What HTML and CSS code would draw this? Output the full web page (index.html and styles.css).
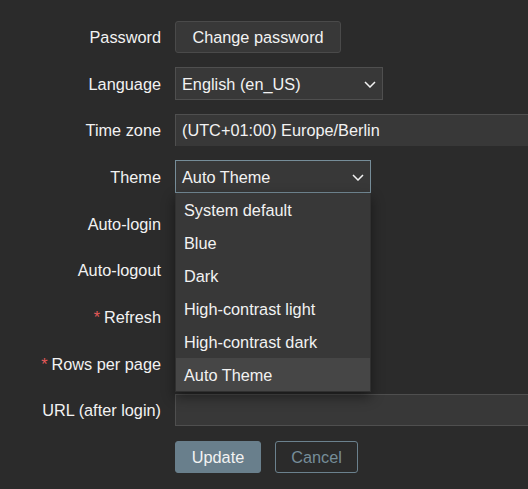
FILE: index.html
```html
<!DOCTYPE html>
<html>
<head>
<meta charset="utf-8">
<link rel="stylesheet" href="styles.css">
</head>
<body>
<form class="form">
  <div class="label">Password</div>
  <div class="field"><button type="button" class="btn btn-grey">Change password</button></div>

  <div class="label">Language</div>
  <div class="field"><div class="select sel-lang"><span>English (en_US)</span><svg class="chev" width="12" height="7" viewBox="0 0 12 7"><path d="M1 1 L6 6 L11 1" fill="none" stroke="#f2f2f2" stroke-width="1.5"/></svg></div></div>

  <div class="label">Time zone</div>
  <div class="field clip"><div class="select sel-tz"><span>(UTC+01:00) Europe/Berlin</span></div></div>

  <div class="label">Theme</div>
  <div class="field">
    <div class="theme-wrap">
      <div class="select sel-theme focused"><span>Auto Theme</span><svg class="chev" width="12" height="7" viewBox="0 0 12 7"><path d="M1 1 L6 6 L11 1" fill="none" stroke="#f2f2f2" stroke-width="1.5"/></svg></div>
      <ul class="dropdown">
        <li>System default</li>
        <li>Blue</li>
        <li>Dark</li>
        <li>High-contrast light</li>
        <li>High-contrast dark</li>
        <li class="hover">Auto Theme</li>
      </ul>
    </div>
  </div>

  <div class="label">Auto-login</div>
  <div class="field"><span class="checkbox"></span></div>

  <div class="label">Auto-logout</div>
  <div class="field"><span class="checkbox"></span><span class="input small"></span></div>

  <div class="label"><span class="req">*</span> Refresh</div>
  <div class="field"><span class="input small"></span></div>

  <div class="label"><span class="req">*</span> Rows per page</div>
  <div class="field"><span class="input small"></span></div>

  <div class="label">URL (after login)</div>
  <div class="field clip"><span class="input wide"></span></div>

  <div class="label"></div>
  <div class="field buttons">
    <button type="button" class="btn btn-primary">Update</button>
    <button type="button" class="btn btn-alt">Cancel</button>
  </div>
</form>
</body>
</html>
```

FILE: styles.css
```css
html, body {
  margin: 0;
  padding: 0;
  background: #2b2b2b;
  overflow: hidden;
}
body {
  width: 528px;
  height: 489px;
  font-family: "Liberation Sans", Arial, sans-serif;
  font-size: 16.3px;
  color: #f2f2f2;
}
.form {
  display: grid;
  grid-template-columns: 161px minmax(0, 1fr);
  grid-auto-rows: 32px;
  column-gap: 14px;
  row-gap: 14.67px;
  padding-top: 21px;
  width: 528px;
}
.label {
  display: flex;
  align-items: center;
  justify-content: flex-end;
  white-space: nowrap;
  padding-top: 1px;
}
.req {
  color: #e45959;
  margin-right: 4px;
}
.field {
  display: flex;
  align-items: center;
  gap: 10px;
  min-width: 0;
}
.field.clip {
  overflow: hidden;
}
.btn {
  height: 32px;
  box-sizing: border-box;
  font-family: inherit;
  font-size: 16.3px;
  border-radius: 3px;
  padding: 1px 0 0;
  cursor: pointer;
  text-align: center;
  flex-shrink: 0;
}
.btn-grey {
  background: #383838;
  border: 1px solid #4a4a4a;
  color: #f2f2f2;
  width: 166px;
}
.btn-primary {
  background: #697f8c;
  border: 1px solid #697f8c;
  color: #f2f2f2;
  width: 86px;
}
.btn-alt {
  background: transparent;
  border: 1px solid #6b818e;
  color: #768d99;
  width: 83px;
}
.buttons {
  gap: 14px;
}
.select {
  box-sizing: border-box;
  height: 33px;
  background: #383838;
  border: 1px solid #4f4f4f;
  display: flex;
  align-items: center;
  justify-content: space-between;
  padding: 1px 6px 0 6px;
  white-space: nowrap;
  flex-shrink: 0;
}
.sel-lang { width: 208px; }
.sel-tz { width: 420px; }
.sel-theme { width: 196px; }
.focused { border-color: #768d99; }
.theme-wrap {
  position: relative;
}
.dropdown {
  position: absolute;
  left: 0;
  top: 33px;
  width: 196px;
  box-sizing: border-box;
  margin: 0;
  padding: 0;
  list-style: none;
  background: #383838;
  border: 1px solid #303030;
  border-top: 0;
  box-shadow: 0 5px 12px rgba(0, 0, 0, 0.45);
  z-index: 10;
}
.dropdown li {
  height: 33px;
  line-height: 34px;
  padding-left: 8px;
  white-space: nowrap;
}
.dropdown li.hover {
  background: #464646;
}
.checkbox {
  width: 16px;
  height: 16px;
  box-sizing: border-box;
  border: 1px solid #4f4f4f;
  background: #383838;
}
.input {
  box-sizing: border-box;
  height: 32px;
  background: #383838;
  border: 1px solid #4f4f4f;
  flex-shrink: 0;
}
.input.small { width: 100px; }
.input.wide { width: 420px; }
```
